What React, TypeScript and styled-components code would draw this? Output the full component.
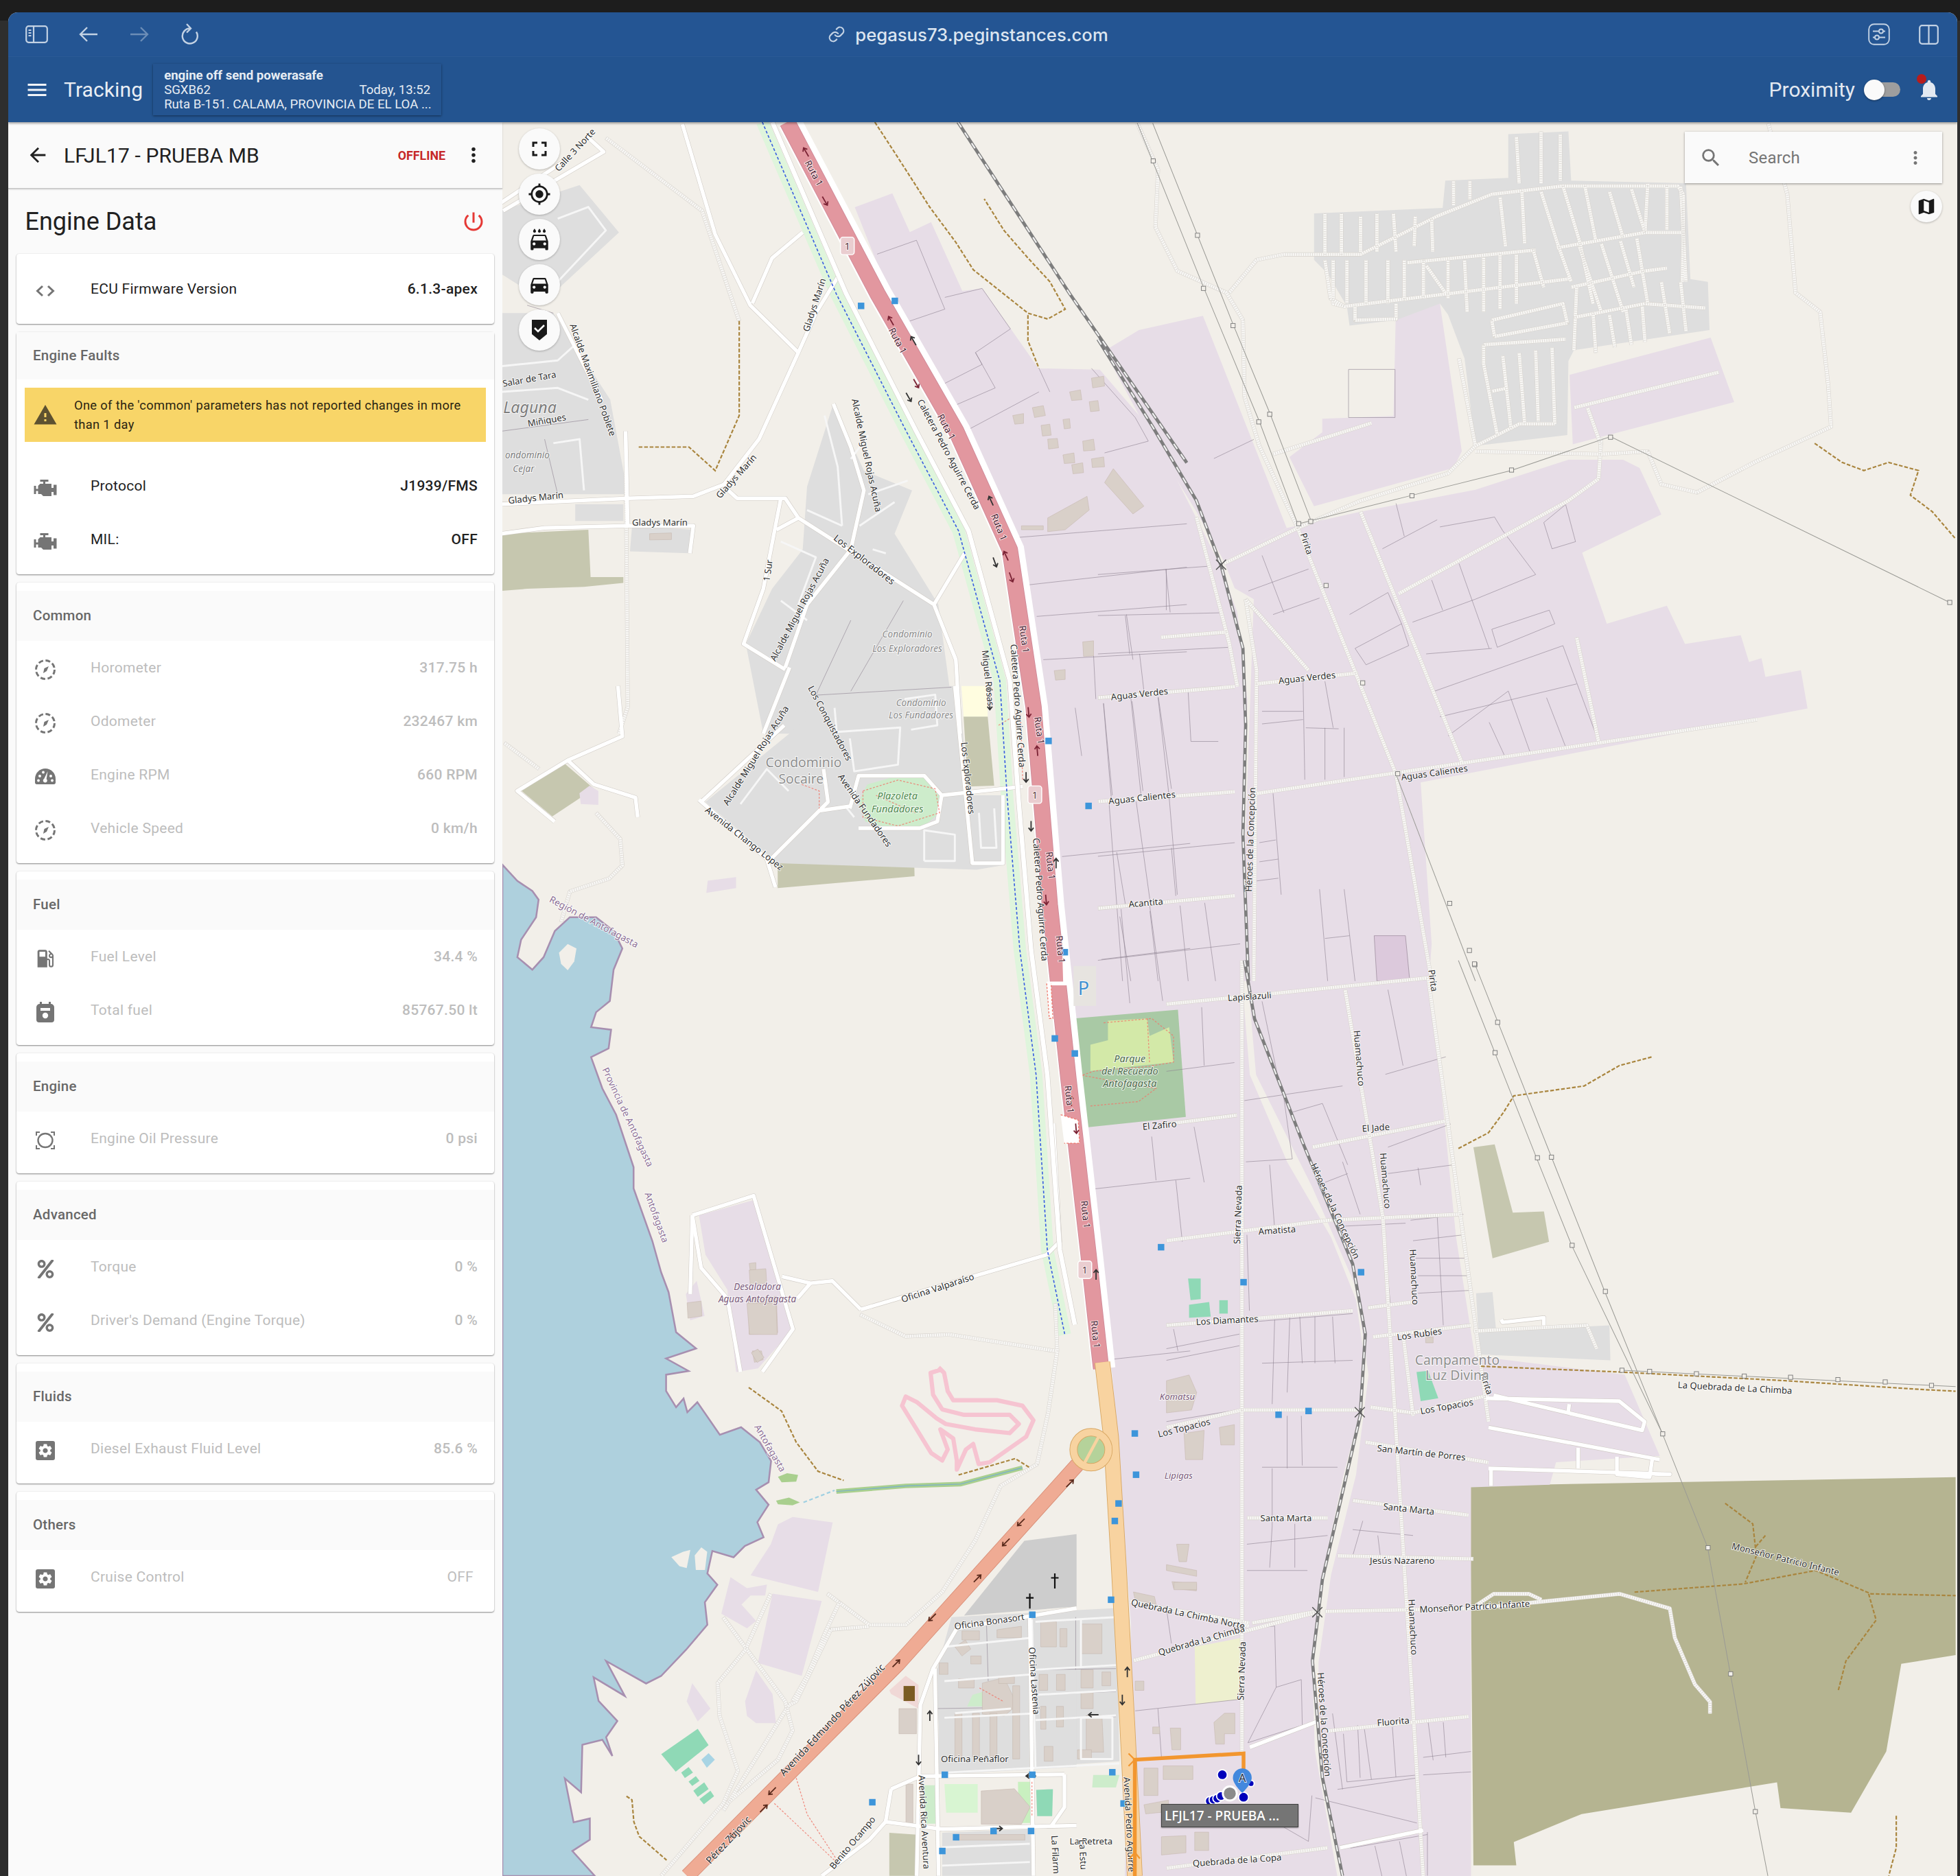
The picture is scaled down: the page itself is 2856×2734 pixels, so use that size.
import React from "react";
import styled, { createGlobalStyle } from "styled-components";
import { FaPercent } from "react-icons/fa";
import {
  MdArrowBack,
  MdDirectionsCar,
  MdFullscreen,
  MdGpsFixed,
  MdLocalCarWash,
  MdLocalGasStation,
  MdMap,
  MdMenu,
  MdMoreVert,
  MdNotifications,
  MdPowerSettingsNew,
  MdSearch,
  MdSettings,
  MdWarning,
} from "react-icons/md";

const GlobalStyle = createGlobalStyle`
  html, body { margin: 0; padding: 0; background: #1d1d1d; }
  * { box-sizing: border-box; }
  body { font-family: Roboto, "Liberation Sans", sans-serif; }
`;

/* ---------- page shell ---------- */

const Frame = styled.div`
  width: 2856px;
  height: 2734px;
  padding: 18px 4px 0 12px;
  overflow: hidden;
  background: linear-gradient(#1d1d1d 0, #1d1d1d 30px, #2e2e2e 30px);
`;

const Browser = styled.div`
  height: 100%;
  display: flex;
  flex-direction: column;
  border-radius: 14px 14px 0 0;
  overflow: hidden;
  background: #fafafa;
`;

const TitleBar = styled.div`
  height: 65px;
  flex: none;
  display: flex;
  align-items: center;
  padding: 0 24px 0 25px;
  background: #245593;
  border-bottom: 1px solid #2c5c98;
  color: #c3d2e4;
`;

const NavIcons = styled.div`
  display: flex;
  align-items: center;
  gap: 44px;
  width: 300px;
`;

const UrlBar = styled.div`
  flex: 1;
  display: flex;
  justify-content: center;
  align-items: center;
  gap: 14px;
  margin-left: -238px;
  font-family: Inter, "Noto Sans", sans-serif;
  font-size: 25.7px;
  font-weight: 500;
  color: #dce5f0;
`;

const WinIcons = styled.div`
  display: flex;
  align-items: center;
  gap: 42px;
  margin-right: 3px;
`;

const AppBar = styled.header`
  height: 95px;
  flex: none;
  display: flex;
  align-items: center;
  padding: 0 23px 0 24px;
  background: #235490;
  color: #f1f4f8;
  box-shadow: 0 2px 3px rgba(0, 0, 0, 0.35);
  z-index: 3;
`;

const AppTitle = styled.div`
  margin-left: 21px;
  font-size: 30px;
  letter-spacing: 0.1px;
  color: #e9eef4;
`;

const Notice = styled.div`
  width: 420px;
  height: 75px;
  margin-left: 15px;
  padding: 7px 16px;
  background: #245490;
  box-shadow: 0 1px 3px rgba(0, 0, 0, 0.45);
  font-size: 18.6px;
  line-height: 21px;
  color: #e6ecf3;
  white-space: nowrap;
`;

const NoticeTitle = styled.div`
  font-weight: 700;
`;

const NoticeRow = styled.div`
  display: flex;
  justify-content: space-between;
`;

const Spacer = styled.div`
  flex: 1;
`;

const ProximityLabel = styled.div`
  font-size: 30px;
  color: #e3e9f1;
`;

const Toggle = styled.div`
  position: relative;
  width: 48px;
  height: 21px;
  margin: 0 24px 0 18px;
  border-radius: 11px;
  background: #9e9e9e;
`;

const ToggleThumb = styled.span`
  position: absolute;
  left: -5px;
  top: -4px;
  width: 30px;
  height: 30px;
  border-radius: 50%;
  background: #fafafa;
  box-shadow: 0 1px 3px rgba(0, 0, 0, 0.4);
`;

const Bell = styled.div`
  position: relative;
  display: flex;
  color: #e3e9f1;
`;

const BellDot = styled.span`
  position: absolute;
  left: 0;
  top: -5px;
  width: 14px;
  height: 14px;
  border-radius: 50%;
  background: #b71c1c;
`;

const Body = styled.div`
  flex: 1;
  min-height: 0;
  display: flex;
`;

/* ---------- side panel ---------- */

const Panel = styled.aside`
  width: 720px;
  flex: none;
  padding: 0 12px;
  background: #fafafa;
  z-index: 2;
`;

const PanelHeader = styled.div`
  height: 97px;
  margin: 0 -12px;
  padding: 0 25px 0 26px;
  display: flex;
  align-items: center;
  border-bottom: 1px solid #c4c4c4;
  box-shadow: 0 1px 2px rgba(0, 0, 0, 0.2);
  color: #212121;
`;

const PanelTitle = styled.div`
  margin-left: 21px;
  flex: 1;
  font-size: 30px;
  letter-spacing: 0.1px;
`;

const Offline = styled.div`
  margin-right: 24px;
  font-size: 17.8px;
  font-weight: 700;
  color: #c62828;
`;

const HeadingRow = styled.div`
  height: 95px;
  padding: 0 12px 0 12.5px;
  display: flex;
  align-items: center;
  justify-content: space-between;
  color: #212121;
`;

const Heading = styled.h2`
  margin: 0;
  font-size: 36px;
  font-weight: 400;
`;

const Card = styled.section<{ $flush?: boolean }>`
  margin-bottom: 12px;
  padding: ${(p) => (p.$flush ? "0 0 12px" : "12px 0")};
  border-radius: 4px;
  background: #fff;
  box-shadow: 0 1px 2px rgba(0, 0, 0, 0.45), 0 0 2px rgba(0, 0, 0, 0.08);
`;

const CardTitle = styled.div<{ $short?: boolean }>`
  height: ${(p) => (p.$short ? 69 : 73)}px;
  display: flex;
  align-items: center;
  padding: 0 0 2px 24px;
  background: #fafafa;
  font-size: 20.5px;
  font-weight: 500;
  letter-spacing: 0.25px;
  color: #686868;
`;

const Row = styled.div<{ $muted?: boolean }>`
  height: 78px;
  display: flex;
  align-items: center;
  padding-right: 24px;
  font-size: 21px;
  letter-spacing: 0.28px;
  color: ${(p) => (p.$muted ? "#bdbdbd" : "#212121")};
`;

const IconSlot = styled.div`
  width: 108px;
  flex: none;
  display: flex;
  justify-content: center;
  padding-right: 24px;
  margin-top: 6px;
  color: #757575;
`;

const RowLabel = styled.div`
  flex: 1;
`;

const RowValue = styled.div<{ $inset?: boolean; $thin?: boolean }>`
  font-weight: ${(p) => (p.$thin ? 400 : 500)};
  margin-right: ${(p) => (p.$inset ? 6 : 0)}px;
`;

const Alert = styled.div`
  height: 79px;
  margin: 12px 12px 25px;
  padding: 0 34px 0 12px;
  display: flex;
  align-items: center;
  gap: 24px;
  background: #f8d568;
  font-size: 18.3px;
  line-height: 27.5px;
  letter-spacing: 0.35px;
  color: #2a2412;
  svg {
    flex: none;
    color: #5d5130;
  }
`;

const GearTile = styled.span`
  width: 28px;
  height: 28px;
  display: flex;
  align-items: center;
  justify-content: center;
  border-radius: 3px;
  background: #757575;
  color: #fff;
`;

/* ---------- map area ---------- */

const MapArea = styled.main`
  position: relative;
  flex: 1;
  min-width: 0;
  overflow: hidden;
  background: #f2efe9;
`;

const MapSvg = styled.svg`
  display: block;
  width: 100%;
  height: 100%;
  text {
    font-family: "Noto Sans", "DejaVu Sans", sans-serif;
    paint-order: stroke;
    stroke: rgba(255, 255, 255, 0.85);
    stroke-width: 1px;
    text-anchor: middle;
  }
`;

const MapTools = styled.div`
  position: absolute;
  left: 24px;
  top: 9px;
  display: flex;
  flex-direction: column;
  gap: 6px;
`;

const RoundButton = styled.button<{ $size?: number }>`
  width: ${(p) => p.$size ?? 60}px;
  height: ${(p) => p.$size ?? 60}px;
  padding: 0;
  display: flex;
  align-items: center;
  justify-content: center;
  border: 0;
  border-radius: 50%;
  background: #fafafa;
  color: #1a1a1a;
  box-shadow: 0 1px 3px rgba(0, 0, 0, 0.25);
`;

const SearchBox = styled.div`
  position: absolute;
  right: 22px;
  top: 14px;
  width: 375px;
  height: 75px;
  display: flex;
  align-items: center;
  padding: 0 24px 0 21px;
  background: #fafafa;
  color: #757575;
  box-shadow: 0 1px 3px rgba(0, 0, 0, 0.4);
  font-size: 24px;
`;

const SearchText = styled.div`
  flex: 1;
  margin-left: 38px;
  letter-spacing: 0.2px;
`;

const MapToggle = styled.div`
  position: absolute;
  right: 22px;
  top: 100px;
`;

const VehicleLabel = styled.div`
  position: absolute;
  left: 960px;
  top: 2451px;
  width: 200px;
  height: 34px;
  padding-left: 4px;
  display: flex;
  align-items: center;
  background: #757575;
  border: 1px solid #3f3f3f;
  box-shadow: 0 1px 2px rgba(0, 0, 0, 0.4);
  font-family: "Noto Sans", sans-serif;
  font-size: 19px;
  font-weight: 500;
  color: #fff;
`;

/* ---------- drawn icons ---------- */

const SidebarIcon = () => (
  <svg width="33" height="26" viewBox="0 0 33 26" fill="none" stroke="currentColor" strokeWidth="2.2">
    <rect x="1.2" y="1.2" width="30.6" height="23.6" rx="3.5" />
    <path d="M12 1.2v23.6" />
    <path d="M4.5 7h4M4.5 11h4M4.5 15h4" strokeWidth="1.8" />
  </svg>
);

const BackIcon = ({ faded }: { faded?: boolean }) => (
  <svg width="30" height="26" viewBox="0 0 30 26" fill="none" stroke="currentColor" strokeWidth="2.4" opacity={faded ? 0.45 : 1}>
    {faded ? <path d="M2 13h25M17 3l10 10-10 10" /> : <path d="M28 13H3M13 3 3 13l10 10" />}
  </svg>
);

const ReloadIcon = () => (
  <svg width="28" height="32" viewBox="0 0 28 32" fill="none" stroke="currentColor" strokeWidth="2.4">
    <path d="M15 7.5a11 11 0 1 0 9 5" />
    <path d="M10 1l6 6.5-6 6" />
  </svg>
);

const FiltersIcon = () => (
  <svg width="32" height="32" viewBox="0 0 32 32" fill="none" stroke="currentColor" strokeWidth="1.9">
    <rect x="1.2" y="1.2" width="29.6" height="29.6" rx="7.5" />
    <path d="M7 11.5h9M22 11.5h3M7 20.5h3M16 20.5h9" />
    <circle cx="19" cy="11.5" r="3" />
    <circle cx="13" cy="20.5" r="3" />
  </svg>
);

const SplitIcon = () => (
  <svg width="29" height="29" viewBox="0 0 29 29" fill="none" stroke="currentColor" strokeWidth="2.2">
    <rect x="1.2" y="1.2" width="26.6" height="26.6" rx="3.5" />
    <path d="M14.5 1.2v26.6" />
  </svg>
);

const LinkIcon = () => (
  <svg width="26" height="26" viewBox="0 0 24 24" fill="none" stroke="#c3d2e4" strokeWidth="2" strokeLinecap="round">
    <path d="M10 13a5 5 0 0 0 7.5.5l3-3a5 5 0 0 0-7-7l-1.7 1.7" />
    <path d="M14 11a5 5 0 0 0-7.5-.5l-3 3a5 5 0 0 0 7 7l1.7-1.7" />
  </svg>
);

const CodeIcon = () => (
  <svg width="30" height="26" viewBox="0 0 30 26" fill="none" stroke="currentColor" strokeWidth="3">
    <path d="M11 6 3.5 13l7.5 7M19 6l7.5 7-7.5 7" />
  </svg>
);

const EngineIcon = () => (
  <svg width="36" height="36" viewBox="0 0 24 24" fill="currentColor">
    <path d="M7 4v2h3v2H7l-2 2v3H3v-3H1v8h2v-3h2v3h3l2 2h8v-4h2v3h3V9h-3v3h-2V8h-6V6h3V4H7z" />
  </svg>
);

const DashedGaugeIcon = () => (
  <svg width="32" height="32" viewBox="0 0 32 32" fill="none" stroke="currentColor">
    <circle cx="16" cy="16" r="13.5" strokeWidth="3" strokeDasharray="7 3.6" />
    <path d="M13 21l1.5-7L21 11l-3 7z" fill="currentColor" stroke="none" />
  </svg>
);

const RpmIcon = () => (
  <svg width="32" height="28" viewBox="0 0 32 28" fill="currentColor">
    <path d="M16 2C7.7 2 1 8.7 1 17v5.5c0 1.4 1.1 2.5 2.5 2.5h25c1.4 0 2.5-1.1 2.5-2.5V17C31 8.7 24.3 2 16 2z" />
    <circle cx="8" cy="13" r="2" fill="#fff" />
    <circle cx="13" cy="7.5" r="1.9" fill="#fff" />
    <circle cx="24" cy="13" r="2" fill="#fff" />
    <circle cx="6" cy="19.5" r="1.9" fill="#fff" />
    <circle cx="26" cy="19.5" r="1.9" fill="#fff" />
    <path d="M19.5 6 17.7 17.2a3 3 0 1 1-3.4-.3z" fill="#fff" />
  </svg>
);

const CanIcon = () => (
  <svg width="26" height="30" viewBox="0 0 26 30" fill="currentColor">
    <path d="M5 0h3v3h10V0h3v3a5 5 0 0 1 5 5v18a4 4 0 0 1-4 4H4a4 4 0 0 1-4-4V8a5 5 0 0 1 5-5z" />
    <rect x="6" y="9" width="14" height="4" fill="#fff" />
    <circle cx="13" cy="20" r="4.2" fill="#fff" />
  </svg>
);

const OilIcon = () => (
  <svg width="28" height="26" viewBox="0 0 28 26" fill="none" stroke="currentColor">
    <ellipse cx="14" cy="13" rx="10.5" ry="10" strokeWidth="2.4" />
    <path d="M1 6V1h5M22 1h5v5M27 20v5h-5M6 25H1v-5" strokeWidth="2" />
  </svg>
);

const PennantIcon = () => (
  <svg width="26" height="32" viewBox="0 0 26 32">
    <path d="M2 1h22v21l-11 9-11-9z" fill="#1a1a1a" />
    <path d="M6 13l5 5 9-9" fill="none" stroke="#fff" strokeWidth="2.6" />
  </svg>
);

/* ---------- map drawing ---------- */

// every map shape below was read off a crop, a prefix tells which crop: [x0, y0, kx, ky]
const crops: Record<string, number[]> = {
  m: [0, 0, 1, 1],
  a: [400.8, 93.3, 0.35, 0.315],
  b: [878.5, 98.8, 0.4377, 0.4377],
  c: [403.5, 549, 0.35, 0.35],
  d: [403.5, 1043, 0.292, 0.292],
  e: [933.3, 768.6, 0.4027, 0.467],
  f: [713.7, 1262.8, 0.28, 0.183],
};

const toPath = (s: string, close = false) => {
  const [key, rest] = s.split(":");
  const [x0, y0, kx, ky] = crops[key];
  const pts = rest.trim().split(/\s+/).map((p) => {
    const [x, y] = p.split(",").map(Number);
    return `${(x0 + x * kx).toFixed(1)} ${(y0 + y * ky).toFixed(1)}`;
  });
  return `M${pts.join("L")}${close ? "Z" : ""}`;
};

const toPoint = (x: number, y: number, key = "m") => {
  const [x0, y0, kx, ky] = crops[key];
  return [x0 + x * kx, y0 + y * ky];
};

const sea =
  "m:402,692 414,705 426,713 431,720 429,734 417,752 414,766 426,776 435,766 444,745 456,734 477,734 491,745 498,759 491,776 488,801 477,810 473,822 489,824 487,839 473,846 482,871 493,892 507,934 507,951 522,993 529,1018 535,1034 541,1066 557,1079 533,1087 551,1097 533,1100 533,1113 541,1126 547,1119 550,1130 558,1122 576,1148 593,1142 608,1154 617,1169 615,1186 605,1192 615,1204 606,1218 611,1230 596,1237 587,1246 570,1241 566,1259 574,1268 564,1282 566,1300 549,1320 529,1341 517,1347 485,1329 500,1357 475,1342 479,1361 494,1377 485,1390 490,1405 482,1392 466,1396 465,1434 452,1423 459,1458 472,1455 472,1472 458,1481 476,1501 402,1501";

const olive = [
  "e:603,900 1568,885 1568,1190 1460,1205 1430,1355 1360,1460 1220,1452 1213,1408 825,1462 690,1510 695,1550 610,1550",
];

const paleOlive = [
  "e:610,320 652,315 688,432 750,430 760,482 648,510",
  "c:625,405 830,380 830,330 935,325 938,435 625,462",
  "c:40,240 135,175 205,235 110,298",
  "c:1050,70 1105,70 1120,228 1060,230",
  "a:3,1060 200,1050 205,1170 280,1170 280,1185 190,1195 60,1200 3,1205",
  "d:1055,1450 1130,1455 1130,1568 1055,1568",
];

const purple = [
  "m:684,166 714,155 728,186 745,178 770,233 786,231 831,295 880,296 922,345 975,450 990,490 998,560 995,700 995,800 1000,860 1030,930 1065,990 1085,1040 1092,1090 1088,1130 1075,1180 1058,1260 1050,1330 1052,1400 1070,1501 900,1501 905,1300 890,1100 875,1000 860,850 840,640 825,490 800,430 745,320",
  "b:0,395 22,410 75,378 192,352 345,740 230,800 180,710 100,580",
  "b:350,610 410,565 410,540 540,535 545,330 625,330 665,600 650,630 395,700",
  "b:862,460 1120,392 1163,510 868,587",
  "b:690,670 860,615 960,615 990,630 1030,715 885,785 930,915 1040,882 1073,952 1175,936 1190,985 1213,978 1220,1012 1285,1000 1297,1070 590,1205 610,1500 605,1568 260,1568 285,870 250,850 230,800 345,740 480,710",
  "m:1000,640 1120,620 1143,770 1165,990 1180,1085 1300,1100 1328,1165 1245,1170 1240,1188 1177,1190 1177,1501 1075,1501 1055,1400 1055,1330 1065,1260 1085,1180 1095,1100 1085,1030 1050,950 1005,860 998,780",
  "d:790,585 900,600 860,790 675,745 730,660 750,605",
  "d:735,795 870,815 815,1020 695,985",
  "d:620,750 665,780 720,770 715,800 675,800 650,825 690,870 665,890 595,850",
  "d:690,1005 735,1070 745,1150 690,1150 665,1130 660,1090",
  "d:515,1040 565,1110 530,1145 500,1090",
  "c:445,1210 570,1175 660,1470 580,1560 530,1568 510,1380 460,1300",
  "c:465,445 530,437 530,462 462,473",
  "c:172,245 195,228 215,240 215,272 175,270",
  "c:415,1390 440,1360 458,1440 425,1450",
];

const gray = [
  "b:395,165 630,155 635,105 750,100 750,20 860,15 865,105 1075,110 1083,285 1115,290 1118,378 870,415 860,435 858,570 690,590 670,430 640,350 625,330 545,360 460,370 455,335 420,275 395,250",
  "a:0,240 180,175 270,295 100,470 0,400",
  "a:0,500 120,500 180,600 250,720 290,960 3,960",
  "a:760,730 830,900 940,950 900,1060 1000,1240 1040,1568 720,1568 600,1568 560,1340 620,1200 690,1100 700,940",
  "c:460,265 675,90 710,0 1040,0 1060,250 1145,250 1140,410 1080,420 625,405",
  "a:170,985 280,985 280,1028 170,1028",
  "a:300,1040 440,1050 430,1110 295,1105",
  "f:170,170 640,130 650,800 150,850 120,450",
  "d:1190,1000 1440,880 1568,880 1568,1270 1190,1290",
  "d:1200,1450 1440,1440 1450,1568 1200,1568",
  "e:615,570 648,568 655,635 880,625 882,685 622,675",
];

const darkGray = ["d:1260,855 1425,650 1568,632 1568,830"];

const greens: [string, string][] = [
  ["#a9c9a5", "c:1302,760 1540,740 1558,985 1320,1010"],
  ["#d3e9a8", "c:1380,765 1470,760 1475,800 1520,780 1530,860 1480,865 1340,880 1340,820 1380,810"],
  ["#cdeccb", "c:810,265 830,225 890,208 960,208 995,240 995,290 960,320 880,325 825,310"],
  ["#fffde0", "c:1045,0 1105,0 1105,70 1050,70"],
  ["#eef0cf", "f:865,300 1000,260 990,530 868,550"],
  ["#8fd9b6", "e:43,545 68,545 68,580 48,582"],
  ["#8fd9b6", "e:45,590 85,585 88,610 45,612"],
  ["#8fd9b6", "e:105,582 122,582 122,605 105,605"],
  ["#8fd9b6", "e:497,705 520,703 540,750 505,755"],
  ["#8fd9b6", "d:430,1235 530,1165 560,1210 470,1283"],
  ["#8fd9b6", "d:485,1285 505,1270 517,1285 495,1300"],
  ["#8fd9b6", "d:505,1310 525,1295 535,1308 515,1322"],
  ["#8fd9b6", "d:518,1335 548,1312 560,1330 530,1352"],
  ["#8fd9b6", "d:535,1358 565,1335 575,1350 547,1372"],
  ["#a8d4e4", "d:540,1250 560,1232 577,1250 555,1272"],
  ["#8fd9b6", "f:412,925 460,922 458,1040 415,1040"],
  ["#d8f5d2", "f:150,900 245,900 245,1025 155,1025"],
  ["#c9f0c0", "f:360,890 395,890 395,1070 362,1070"],
  ["#cdeccb", "f:230,510 330,465 325,560 215,560"],
  ["#cdeccb", "f:575,860 650,860 640,915 572,915"],
  ["#cdeccb", "d:1150,1320 1185,1320 1185,1425 1155,1425"],
  ["#fbeee0", "d:1060,1055 1100,1020 1135,1050 1135,1110 1100,1080 1060,1070"],
];

const buildings = [
  "a:1380,930 1400,895 1470,990 1445,1010",
  "a:1250,1020 1340,965 1345,1000 1290,1050 1250,1055",
  "a:1330,1335 1355,1332 1355,1370 1332,1372",
  "a:1265,1408 1290,1405 1290,1430 1268,1432",
  "a:1190,1040 1240,1040 1240,1050 1190,1050",
  "a:1170,760 1195,755 1195,780 1175,782",
  "a:1215,740 1240,735 1245,760 1220,765",
  "a:1300,700 1325,695 1328,720 1305,722",
  "a:1350,665 1378,660 1380,685 1353,690",
  "a:1345,725 1365,722 1368,748 1348,750",
  "a:1235,785 1255,782 1258,810 1238,812",
  "a:1285,770 1300,768 1302,792 1288,794",
  "a:1250,820 1272,818 1275,842 1252,845",
  "a:1330,825 1355,820 1358,848 1332,850",
  "a:1285,860 1310,855 1312,880 1288,882",
  "a:1350,870 1378,865 1380,890 1352,892",
  "a:1305,885 1330,880 1332,905 1308,908",
  "a:340,1060 390,1058 390,1075 340,1076",
  "c:560,1320 575,1318 575,1335 562,1335",
  "c:560,1335 598,1332 600,1365 562,1368",
  "c:558,1400 622,1395 625,1478 560,1482",
  "c:418,1410 450,1406 452,1440 420,1445",
  "c:567,1520 588,1520 592,1540 572,1546",
  "d:665,0 745,0 748,85 672,85",
  "d:677,135 695,125 712,148 693,162",
  "d:1310,1040 1370,1025 1405,1100 1370,1130 1310,1125",
  "f:800,15 870,25 870,55 805,45",
  "f:690,60 750,80 755,115 695,95",
  "f:695,450 720,450 720,490 695,490",
  "f:745,650 765,650 765,680 745,680",
  "f:795,655 825,655 825,750 800,750",
  "f:920,630 950,590 980,590 980,680 950,680 950,725 925,725",
  "f:775,820 860,820 860,880 775,880",
  "f:720,830 760,830 760,950 720,950",
  "f:770,1130 840,1125 840,1200 770,1210",
  "f:865,1110 905,1110 905,1190 865,1190",
  "f:720,990 790,970 790,1020 725,1030",
  "f:255,930 350,920 395,1000 370,1075 255,1075",
  "f:555,600 600,600 605,760 555,760",
  "f:435,735 460,735 460,800 435,800",
  "f:540,400 575,400 575,480 540,480",
  "f:600,410 625,410 625,470 600,470",
  "f:420,420 445,420 445,490 420,490",
  "f:470,420 495,420 495,490 470,490",
  "f:540,500 575,500 575,570 540,570",
  "f:425,190 470,190 470,300 425,300",
  "f:480,220 500,220 500,300 480,300",
  "f:540,200 600,200 600,330 540,330",
  "f:200,230 250,230 250,270 200,270",
  "f:300,225 370,210 370,260 300,260",
  "f:180,300 210,270 225,310 200,340",
  "f:225,340 255,340 255,375 225,375",
  "f:135,370 160,370 160,420 135,420",
  "f:190,440 235,440 235,480 190,480",
  "f:305,430 350,430 350,460 305,460",
  "f:425,560 440,560 440,660 425,660",
  "f:470,560 490,560 490,650 470,650",
  "f:530,750 570,750 570,790 530,790",
  "f:20,570 70,570 70,680 20,680",
  "f:40,900 60,900 60,1080 40,1080",
  "f:180,590 200,590 200,780 180,780",
  "f:230,590 250,590 250,780 230,780",
  "f:280,590 300,590 300,780 280,780",
  "f:345,470 365,470 365,790 345,790",
  "f:180,1120 380,1120 380,1145 180,1145",
  "e:0,720 45,710 60,740 50,770 0,775",
  "e:35,810 75,805 72,855 38,855",
  "e:105,800 135,795 135,830 108,830",
  "e:515,645 530,645 530,655 515,655",
  "e:20,1000 45,1000 40,1030 25,1030",
  "e:0,1035 60,1045 60,1055 0,1045",
  "e:15,1065 60,1065 60,1078 15,1078",
];

const parcels = [
  "b:0,825 200,810", "b:0,900 225,895", "b:125,815 125,890", "b:50,900 58,970", "b:0,970 240,958",
  "b:10,1060 25,1240", "b:60,1050 80,1240", "b:110,1050 130,1230", "b:165,1040 170,1130 220,1130",
  "b:20,1240 45,1568", "b:0,1340 250,1315", "b:70,1240 95,1420", "b:130,1230 145,1410", "b:40,1450 60,1568",
  "b:95,1440 110,1568", "b:150,1430 165,1568", "b:195,1425 215,1568", "b:0,1530 260,1500", "b:300,790 340,895",
  "b:275,855 385,815", "b:320,898 405,868", "b:300,1075 375,1075", "b:300,1098 375,1090", "b:375,1020 378,1200",
  "b:415,1020 430,1105", "b:415,1200 415,1105", "b:450,1105 450,1195", "b:380,1105 440,1107", "b:320,1225 335,1410",
  "b:295,1315 325,1310", "b:295,1350 330,1345", "b:290,1385 330,1380", "b:405,1400 420,1568", "b:450,1400 470,1568",
  "b:415,1490 460,1485", "b:545,695 560,755", "b:520,778 620,725", "b:625,738 725,720 740,745 800,825 690,870",
  "b:610,835 630,890", "b:660,805 715,960", "b:575,912 690,870", "b:600,970 720,960", "b:610,1040 850,955 915,1130",
  "b:625,1085 875,1025", "b:640,1120 750,1038 790,1150", "b:715,1095 745,1160", "b:820,1050 855,1140",
  "b:460,898 530,858 555,915 470,960 490,990 568,955 555,915", "b:720,925 825,890 835,915 730,958 720,925",
  "b:815,730 855,697 873,765 830,778 815,730", "b:212,613 285,578", "b:458,450 543,450 543,538 458,538 458,450",
  "a:860,350 950,315 1015,490 935,520", "a:1015,460 1100,437 1165,540 1085,600 1130,690 1030,738 1012,680 1100,630 1085,600",
  "a:1045,810 1230,700", "a:1230,640 1255,700", "a:1350,640 1450,765 1480,825 1380,855", "a:1070,810 1150,1010",
  "a:1175,1070 1568,1035", "a:1205,1190 1568,1145", "a:1225,1270 1568,1240", "a:1520,1150 1530,1260", "a:1430,1265 1445,1380",
  "a:1240,1380 1568,1360", "a:1355,1370 1360,1480", "a:1460,1365 1470,1460",
  "c:1305,50 1320,160", "c:1370,40 1390,250", "c:1435,35 1460,240", "c:1495,25 1525,235", "c:1275,390 1568,360",
  "c:1400,380 1420,500", "c:1525,370 1535,480", "c:1410,510 1430,725", "c:1475,500 1505,720", "c:1365,625 1568,600",
  "c:1345,1150 1568,1125", "c:1480,1030 1490,1130", "c:1535,1130 1550,1270", "c:1380,1540 1568,1520", "c:1530,1470 1540,1520",
  "e:70,80 75,180", "e:0,190 135,175", "e:55,285 75,380", "e:155,240 350,215", "e:250,260 310,245 360,350", "e:190,70 225,215",
  "e:440,50 470,180", "e:230,215 250,340", "e:205,350 215,460", "e:158,345 250,340", "e:350,345 385,435", "e:315,380 360,365",
  "e:435,195 555,165", "e:440,320 565,280", "e:440,365 570,350", "e:500,355 505,385", "e:355,455 475,450", "e:430,455 445,590",
  "e:485,445 590,435", "e:538,440 550,625", "e:490,480 590,470", "e:495,510 595,510", "e:500,540 600,540", "e:500,570 605,565",
  "e:160,470 165,600", "e:160,620 370,605", "e:245,610 240,740", "e:215,615 210,760", "e:265,610 270,690", "e:295,610 295,690",
  "e:330,610 335,690", "e:190,690 370,685", "e:0,685 145,660", "e:0,665 145,640", "e:210,870 210,970", "e:240,780 240,870",
  "e:190,868 340,868", "e:268,780 270,865", "e:160,1000 320,985", "e:210,970 205,1040", "e:255,965 255,1040", "e:160,1045 280,1045",
  "e:0,790 140,770", "e:390,960 370,1020", "e:420,985 425,1020", "e:370,975 490,985", "e:330,1290 350,1420", "e:380,1310 385,1400",
  "e:340,1420 500,1400", "e:520,1305 530,1370", "e:550,1305 555,1365", "e:510,1365 605,1355", "e:510,1395 605,1390",
  "e:165,1145 215,1140 218,1245 162,1340 270,1310 268,1232 218,1245", "e:0,1110 10,1170", "f:695,580 990,530", "f:760,570 770,780",
  "f:1290,680 1300,890 1500,860 1490,640", "f:1350,660 1370,880", "f:1430,650 1440,870", "f:1210,960 1500,1070", "f:1200,950 1190,1150 1020,1000",
  "f:1310,1180 1530,1120", "f:1380,1170 1400,1302", "f:1450,1150 1470,1302", "f:1530,1110 1530,1300",
  "f:410,400 640,395", "f:410,510 640,495", "f:410,620 640,605", "f:525,170 525,400", "a:720,1470 1030,1450", "a:800,1280 720,1470", "a:920,1230 800,1460",
  "a:100,820 130,960", "a:0,800 200,770", "a:60,480 120,500", "f:270,190 275,450", "f:120,570 340,565",
];

const streets = [
  // north west
  "a:0,985 290,970 440,965 510,935 590,820 680,600 720,500 775,400",
  "a:0,1060 100,1045 290,1040 440,1040 432,1110",
  "a:415,20 490,300 570,480 680,600",
  "a:575,475 620,360 690,295",
  "a:5,240 235,90 195,50",
  "a:285,800 290,1040",
  "a:510,940 540,970 650,970 680,1020 630,1050",
  "a:640,970 600,1200 555,1340 650,1405",
  "a:680,1020 990,1240 1040,1380 1050,1568",
  "a:990,1240 1060,1110",
  "a:660,1400 600,1568",
  "a:800,1100 700,1240 650,1400",
  "a:760,730 800,840 830,950 800,1100",
  "a:0,220 150,110",
  "a:130,500 230,720",
  // condos
  "c:1030,0 1070,405 1140,405 1140,250",
  "c:1000,250 1185,230",
  "c:730,190 740,265 610,395",
  "c:720,285 790,275",
  "c:790,280 810,205 960,205 1000,250 990,310 950,325 810,325",
  "c:445,260 600,395 620,460",
  "c:450,265 640,90",
  // desaladora
  "c:815,1425 1240,1300 1270,1270 1255,1000",
  "c:635,1350 700,1365 750,1360 815,1425",
  "c:670,1400 700,1365",
  "c:430,1210 570,1165 660,1470 590,1568",
  "c:430,1210 450,1330 510,1400 540,1568",
  "c:430,1210 425,1390",
  "c:260,0 270,115 145,170 30,240 115,310",
  "c:145,170 205,225 300,255 305,300",
  // south neighbourhood
  "d:1130,1568 1140,1100 1175,1000 1240,890 1568,835",
  "d:1190,1568 1180,1000",
  "d:1060,1330 1140,1295 1535,1290",
  "d:1045,1420 1200,1440 1568,1430",
  "d:1440,860 1450,1568",
  "d:870,1568 1000,1470 1045,1420",
  "d:1535,1290 1535,1380 1500,1430",
  "d:1060,1330 1045,1420",
  "m:1000,1398 1060,1375",
  "e:345,1520 510,1490",
  "e:635,750 900,755 950,790 945,805 650,745",
  "e:800,760 798,775",
  "e:640,800 980,855",
  "e:640,870 1000,880 970,880",
  "e:645,870 645,900",
  "e:818,835 818,870",
  "e:895,850 895,880 960,885 965,855",
  "e:665,615 668,620 750,612 750,625",
];

const lanes = [
  // small streets inside the neighbourhoods
  "a:0,635 130,620 170,580", "a:0,700 130,690 200,720", "a:120,830 180,820 190,950", "a:130,260 200,230 240,290 130,420 80,380",
  "a:740,760 770,890 780,1040", "a:700,1000 780,1040", "a:840,810 800,870", "a:840,960 930,925", "a:820,1040 900,980", "a:850,1100 880,1110",
  "a:640,1080 720,1120 680,1240", "a:640,1230 700,1280", "c:755,50 760,105 905,95 900,180 800,195 790,120", "c:915,30 985,20 990,90 930,100",
  "c:800,300 780,275", "c:540,270 600,190 650,240", "c:960,400 960,330 1030,340 1030,400 960,400", "c:1085,290 1090,370 1125,370 1120,280",
  "f:150,610 420,590", "f:150,300 400,260", "f:150,450 400,420", "f:400,180 410,830", "f:410,190 640,170", "f:540,180 540,390", "f:410,400 640,380", "f:410,510 640,490", "f:410,620 640,600",
  "f:540,610 630,610 630,790 540,790 540,610", "f:180,590 340,570", "f:150,850 650,810", "d:1200,1490 1440,1480", "d:1200,1540 1440,1530",
];

const tracks = [
  "b:72,0 110,85 105,190 145,270 235,310 265,360 268,500 295,590 365,740",
  "b:240,310 290,250 340,240 480,240 620,170 720,130 850,115 1060,115 1070,130 1070,210 1068,290",
  "b:415,250 425,320 450,335 860,285",
  "b:1225,0 1260,130 1275,310 1320,345 1335,480 1340,555 1200,620 1095,675 1030,660 1005,600 920,605 690,600",
  "b:660,430 690,590 640,640 480,690 365,740 230,805",
  "b:920,575 915,650 860,690 550,860",
  "b:480,710 665,1168",
  "b:870,520 1135,455",
  "b:895,520 920,590",
  "b:320,605 500,548",
  "b:875,940 915,1130",
  "b:290,1225 1205,1090",
  "b:0,1050 250,1030",
  "b:290,1025 475,1005",
  "b:0,1240 250,1222",
  "b:0,1435 250,1412",
  "b:365,740 545,1190 610,1568",
  "b:270,870 290,1000 285,1568",
  "b:270,870 385,1000",
  "b:180,720 240,950 255,1030",
  "b:115,940 235,930",
  "b:765,25 770,110", "b:810,15 810,110", "b:845,20 845,105", "b:415,165 415,240", "b:445,165 445,240", "b:480,170 480,235",
  "b:510,165 510,235", "b:540,165 545,235", "b:580,170 578,225", "b:610,175 612,235", "b:650,105 650,150", "b:680,105 680,140",
  "b:735,135 745,225", "b:775,125 780,220", "b:810,125 840,220 865,290", "b:850,115 880,215 905,330", "b:890,115 910,215",
  "b:935,125 960,210", "b:975,120 1000,200", "b:1005,110 1000,200", "b:1040,115 1040,195", "b:1065,115 1075,290",
  "b:838,228 1000,200 1068,200", "b:865,300 1000,270", "b:1000,330 1110,338", "b:870,355 1000,330", "b:1030,290 1045,385", "b:1065,290 1075,380",
  "b:875,300 870,415", "b:905,345 910,420", "b:935,350 945,410", "b:965,340 975,405", "b:995,335 1000,400", "b:880,225 920,345", "b:920,220 960,345",
  "b:955,215 980,300", "b:985,210 1005,330", "b:1000,270 1040,265", "b:430,250 430,330 450,335", "b:455,250 455,330", "b:490,250 490,330", "b:530,250 530,330",
  "b:560,250 560,325", "b:595,250 595,320", "b:640,250 640,320", "b:670,250 675,345", "b:705,245 705,345", "b:735,240 735,340", "b:765,240 765,330",
  "b:795,230 815,300", "b:565,255 800,232", "b:600,260 635,310", "b:470,335 470,360 545,358 545,330", "b:720,360 850,330 858,365 725,390 720,360",
  "b:705,405 855,395", "b:705,405 705,440 730,570 690,590", "b:740,425 755,560", "b:770,420 780,550", "b:800,415 805,545", "b:830,410 835,550",
  "b:720,490 745,485", "b:730,570 770,550 835,550",
  "e:0,75 520,30",
  "e:520,30 640,790",
  "e:0,280 140,265",
  "e:290,320 555,275",
  "e:0,480 320,445 585,435",
  "e:0,625 370,600",
  "e:400,595 490,585",
  "e:410,645 605,625",
  "e:610,635 835,625 855,665",
  "e:0,800 150,770 380,770",
  "e:405,765 490,775 640,745",
  "e:395,825 640,860",
  "e:160,955 320,955",
  "e:370,925 600,950",
  "e:340,1020 610,1025",
  "e:315,1115 610,1110 900,1085 1000,1110 1010,1160 1050,1240 1080,1270 1080,1290",
  "e:615,1105 650,1085 720,1085 745,1095",
  "e:320,1320 600,1295",
  "e:0,1555 320,1520",
  "e:170,1135 300,1115",
  "e:0,1110 165,1135",
  "e:150,0 150,1360",
  "e:355,50 430,440 510,1568",
  "e:470,640 490,780",
  "f:690,360 1210,150",
  "f:680,100 1020,210",
  "d:975,30 1100,90 1220,85 1510,130",
  "d:885,795 1000,880 1100,880 1200,790 1290,650 1360,500 1460,440 1490,300 1515,130 1510,0",
  "d:1000,885 895,893 800,1090 780,1100 600,1390",
  "d:920,815 880,900 830,1020 790,1090",
  "d:730,795 660,950 585,1040 590,1130 640,1280 600,1370 430,1568",
  "d:600,860 770,1090 790,1170 750,1250 610,1370",
  "a:240,55 460,240 545,520",
  "a:285,800 290,1500 270,1568",
  "c:0,130 80,190",
  "c:210,290 265,350 270,410 240,440 150,470 130,540",
];

const trails = [
  "a:855,15 905,100 980,230 1040,320 1080,390 1205,500 1250,515 1290,490 1255,420 1205,360 1150,290 1105,210",
  "a:1205,505 1205,570 1230,640",
  "a:545,520 545,760 490,900 430,840 315,840",
  "b:1310,585 1360,620 1400,635 1445,620 1500,635 1485,680 1525,710 1568,760",
  "e:580,322 640,295 670,260 690,232 830,215 900,180 965,165",
  "e:625,695 900,705 1230,720 1500,735 1568,738",
  "e:1110,930 1165,965 1172,1020 1150,1065",
  "e:930,1082 1145,1068 1290,1045 1400,1085 1568,1088",
  "e:1395,1085 1410,1130 1350,1200 1335,1250",
  "e:1190,985 1170,1005",
  "e:1450,1465 1450,1520 1435,1568",
  "d:670,230 760,295 800,380 860,460 930,485",
  "d:1245,470 1400,425 1440,450",
  "d:335,1350 350,1360 355,1420 370,1460 445,1525",
];

const footways = [
  "d:800,1300 830,1400 915,1530",
  "d:740,1370 910,1530",
  "c:1130,90 1180,60 1185,215",
  "c:1370,770 1480,760 1530,800 1530,860 1470,870 1350,880 1320,890 1490,920 1450,950 1340,960",
  "c:1470,760 1475,860",
  "c:820,240 900,215 985,235 995,290 900,320 820,300 820,240",
  "c:850,250 940,290",
  "c:680,225 720,240 720,280",
  "f:250,480 320,540",
  "f:400,890 400,1040",
];

const powerLines = [
  "b:72,0 193,300 295,545 365,732",
  "b:100,0 248,370 315,532 390,728",
  "b:367,732 575,680 755,635 937,573 1557,876",
  "b:545,1190 690,1568",
  "e:580,0 735,338 805,488 985,810 1075,1005 1120,1220 1170,1458 1195,1568",
  "e:612,5 765,337 870,565 985,810",
  "e:905,702 1520,728 1568,730",
];

const towers: [number, number, string][] = [
  [101, 69, "b"], [182, 205, "b"], [193, 302, "b"], [247, 370, "b"], [314, 532, "b"], [294, 546, "b"], [367, 732, "b"], [389, 728, "b"],
  [574, 681, "b"], [756, 634, "b"], [937, 574, "b"], [1557, 876, "b"], [417, 845, "b"], [484, 1023, "b"], [548, 1189, "b"], [643, 1426, "b"],
  [679, 1512, "b"], [689, 1538, "b"], [612, 6, "e"], [658, 106, "e"], [653, 158, "e"], [737, 338, "e"], [765, 337, "e"], [806, 488, "e"],
  [872, 567, "e"], [905, 702, "e"], [960, 704, "e"], [1053, 708, "e"], [1148, 712, "e"], [1240, 714, "e"], [1334, 718, "e"], [1428, 722, "e"],
  [1520, 728, "e"], [986, 811, "e"], [1076, 1006, "e"], [1121, 1222, "e"], [1170, 1458, "e"],
];

const stops: [number, number][] = [
  [689, 245], [716, 241], [839, 593], [871, 645], [852, 762], [860, 843], [844, 831], [929, 998], [995, 1026], [1089, 1018],
  [1023, 1132], [1047, 1129], [908, 1147], [895, 1203], [892, 1217], [826, 1292], [889, 1280], [756, 1420], [826, 1420],
  [890, 1418], [765, 1470], [795, 1465], [825, 1465], [899, 1443], [754, 1481], [909, 1180], [698, 1442],
];

const shields: [number, number][] = [[678, 197], [828, 636], [868, 1016]];

const arrows: [number, number, number, string][] = [
  [645, 122, -30, "#7b2335"], [660, 161, 150, "#7b2335"], [713, 257, -30, "#7b2335"], [733, 307, 150, "#7b2335"], [805, 445, -25, "#7b2335"],
  [809, 462, 160, "#7b2335"], [823, 570, 175, "#7b2335"], [830, 601, -5, "#7b2335"], [837, 720, 175, "#7b2335"], [857, 881, -5, "#7b2335"], [861, 903, 175, "#7b2335"],
  [731, 273, -30, "#333"], [727, 318, 150, "#333"], [793, 401, -25, "#333"], [796, 450, 160, "#333"], [792, 564, 180, "#333"],
  [821, 622, 180, "#333"], [825, 661, 180, "#333"], [845, 691, 0, "#333"], [792, 554, 0, "#333"], [877, 1020, 0, "#333"],
  [902, 1338, 0, "#333"], [898, 1360, 180, "#333"], [744, 1373, 0, "#333"], [735, 1408, 180, "#333"], [875, 1372, -90, "#333"], [825, 1421, -90, "#333"], [798, 1463, 90, "#333"],
  [856, 1187, 45, "#5a2a1c"], [817, 1218, 225, "#5a2a1c"], [805, 1234, 225, "#5a2a1c"], [782, 1263, 45, "#5a2a1c"], [746, 1294, 225, "#5a2a1c"],
  [717, 1331, 45, "#5a2a1c"], [618, 1433, 225, "#5a2a1c"], [611, 1447, 45, "#5a2a1c"], [587, 1467, 225, "#5a2a1c"],
];

// text, x, y, angle, size, colour, italic
type Label = [string, number, number, number?, number?, string?, boolean?];
const ROAD = "#2f2f2f";
const RED = "#4c2030";
const PURPLE = "#8c6f96";
const labels: Label[] = [
  ["Ruta 1", 649, 140, 62, 7, RED], ["Ruta 1", 716, 274, 62, 7, RED], ["Ruta 1", 755, 343, 62, 7, RED], ["Ruta 1", 797, 423, 68, 7, RED],
  ["Ruta 1", 817, 512, 82, 7, RED], ["Ruta 1", 829, 585, 82, 7, RED], ["Ruta 1", 838, 693, 84, 7, RED], ["Ruta 1", 846, 760, 84, 7, RED],
  ["Ruta 1", 853, 880, 84, 7, RED], ["Ruta 1", 866, 972, 84, 7, RED], ["Ruta 1", 874, 1068, 84, 7, RED],
  ["Caletera Pedro Aguirre Cerda", 757, 365, 62, 6.8], ["Caletera Pedro Aguirre Cerda", 812, 565, 86, 6.8], ["Caletera Pedro Aguirre Cerda", 830, 720, 86, 6.8],
  ["Gladys Marín", 654, 245, -72, 6.8], ["Gladys Marín", 591, 383, -48, 6.8], ["Gladys Marín", 429, 401, -6, 6.8], ["Gladys Marín", 528, 421, 0, 6.8],
  ["Alcalde Maximiliano Poblete", 472, 305, 70, 6.8], ["Alcalde Miguel Rojas Acuña", 691, 365, 78, 6.8], ["Alcalde Miguel Rojas Acuña", 642, 489, -62, 6.8],
  ["Alcalde Miguel Rojas Acuña", 607, 606, -58, 6.8], ["Calle 3 Norte", 462, 122, -47, 6.8], ["Salar de Tara", 424, 306, -10, 6.8],
  ["Laguna", 424, 331, 0, 12, "#7d7d7d", true], ["Miñiques", 438, 339, -10, 6.8], ["ondominio", 422, 367, 0, 7, "#7d7d7d", true], ["Cejar", 419, 378, 0, 7, "#7d7d7d", true],
  ["Los Exploradores", 690, 450, 38, 7], ["Condominio", 726, 510, 0, 7, "#8a8a8a", true], ["Los Exploradores", 726, 522, 0, 7, "#8a8a8a", true],
  ["1 Sur", 617, 457, -82, 6.8], ["Miguel Rosas", 788, 543, 84, 6.8], ["Los Exploradores", 772, 623, 84, 6.8], ["Los Conquistadores", 662, 580, 62, 6.8],
  ["Condominio", 643, 614, 0, 10, "#8f8f8f"], ["Socaire", 641, 627, 0, 10, "#8f8f8f"], ["Condominio", 737, 565, 0, 7, "#8a8a8a", true], ["Los Fundadores", 737, 575, 0, 7, "#8a8a8a", true],
  ["Plazoleta", 718, 640, 0, 7.5, "#4e8a4e", true], ["Fundadores", 718, 650, 0, 7.5, "#4e8a4e", true], ["Avenida Fundadores", 690, 650, 55, 6.8], ["Avenida Chango Lopez", 594, 673, 38, 6.8],
  ["Región de Antofagasta", 474, 740, 28, 7, PURPLE], ["Provincia de Antofagasta", 500, 895, 65, 7, PURPLE], ["Antofagasta", 523, 975, 70, 7, PURPLE], ["Antofagasta", 614, 1160, 60, 7, PURPLE],
  ["Desaladora", 606, 1032, 0, 7, "#7a5a7a", true], ["Aguas Antofagasta", 606, 1042, 0, 7, "#7a5a7a", true], ["Oficina Valparaíso", 751, 1033, -18, 6.8],
  ["Parque", 904, 850, 0, 7.5, "#4b6b4b", true], ["del Recuerdo", 904, 860, 0, 7.5, "#4b6b4b", true], ["Antofagasta", 904, 870, 0, 7.5, "#4b6b4b", true],
  ["P", 867, 796, 0, 14, "#3f8fd0"],
  ["Avenida Edmundo Pérez Zújovic", 668, 1378, -47, 7.5], ["Pérez Zujovic", 585, 1474, -47, 7.5],
  ["Aguas Verdes", 912, 558, -6, 6.8], ["Aguas Verdes", 1046, 545, -6, 6.8], ["Aguas Calientes", 914, 641, -6, 6.8], ["Aguas Calientes", 1148, 621, -8, 6.8],
  ["Acantita", 917, 725, -5, 6.8], ["Lapislazuli", 1000, 800, -4, 6.8], ["El Zafiro", 928, 903, -5, 6.8], ["El Jade", 1101, 905, -4, 6.8], ["Amatista", 1022, 987, -4, 6.8],
  ["Los Diamantes", 982, 1059, -3, 6.8], ["Los Rubíes", 1136, 1070, -8, 6.8], ["Komatsu", 942, 1120, 0, 6.8, "#7a5a7a", true], ["Los Topacios", 948, 1145, -14, 6.8], ["Los Topacios", 1158, 1128, -10, 6.8],
  ["San Martín de Porres", 1137, 1165, 6, 6.8], ["Lipigas", 943, 1183, 0, 6.8, "#7a5a7a", true], ["Santa Marta", 1029, 1217, 0, 6.8], ["Santa Marta", 1127, 1210, 6, 6.8], ["Jesús Nazareno", 1122, 1251, 0, 6.8],
  ["Monseñor Patricio Infante", 1180, 1288, -3, 6.8], ["Monseñor Patricio Infante", 1428, 1250, 14, 6.8],
  ["Huamachuco", 1085, 847, 85, 6.8], ["Huamachuco", 1106, 945, 85, 6.8], ["Huamachuco", 1129, 1022, 87, 6.8], ["Huamachuco", 1128, 1302, 87, 6.8],
  ["Sierra Nevada", 993, 972, -88, 6.8], ["Sierra Nevada", 996, 1337, -88, 6.8], ["Héroes de la Concepción", 1003, 672, -88, 6.8], ["Héroes de la Concepción", 1066, 970, 65, 6.8], ["Héroes de la Concepción", 1057, 1380, 86, 6.8],
  ["Pirita", 1043, 436, 72, 6.8], ["Pirita", 1144, 785, 82, 6.8], ["Pirita", 1187, 1108, 72, 6.8],
  ["Campamento", 1166, 1092, 0, 10, "#8f8f8f"], ["Luz Divina", 1166, 1104, 0, 10, "#8f8f8f"], ["La Quebrada de La Chimba", 1388, 1113, 3, 6.8],
  ["Oficina Bonasort", 792, 1300, -8, 6.8], ["Oficina Lastenia", 825, 1345, 86, 6.8], ["Oficina Peñaflor", 780, 1410, 0, 6.8], ["Avenida Rica Aventura", 737, 1458, 87, 6.8],
  ["Avenida Pedro Aguirre", 901, 1460, 87, 6.8], ["La Retreta", 873, 1476, 0, 6.8], ["La Estu", 864, 1484, 87, 6.8], ["La Filarm", 842, 1484, 87, 6.8], ["Quebrada La Chimba Norte", 950, 1294, 12, 6.8], ["Quebrada La Chimba", 962, 1315, -16, 6.8],
  ["Fluorita", 1115, 1380, -5, 6.8], ["Quebrada de la Copa", 990, 1491, -4, 6.8], ["Benito Ocampo", 684, 1476, -50, 6.8],
];

const Shapes = ({ items, fill, close = true, ...rest }: { items: string[]; fill?: string; close?: boolean } & React.SVGProps<SVGPathElement>) => (
  <>
    {items.map((s, i) => (
      <path key={i} d={toPath(s, close)} fill={fill ?? "none"} {...rest} />
    ))}
  </>
);

const Cross = ({ x, y }: { x: number; y: number }) => (
  <path d={`M${x} ${y - 6}v12M${x - 3} ${y - 2.5}h6`} stroke="#111" strokeWidth="1.2" fill="none" />
);

const RoadLine = ({ d, width, casing, color }: { d: string; width: number; casing: string; color: string }) => (
  <>
    <path d={d} fill="none" stroke={casing} strokeWidth={width + 1} strokeLinejoin="round" />
    <path d={d} fill="none" stroke={color} strokeWidth={width} strokeLinejoin="round" />
  </>
);

const rail = ["a:1045,15 1300,450 1568,880", "b:0,395 100,555 180,690 225,808 265,960 270,1100 265,1300 275,1568", "e:155,0 175,100 270,310 370,520 395,640 385,780 310,1060 290,1200 310,1400 350,1568"];

const RED_ROAD = "630 98L702 235L765 345L808 440L827 566L840 724L855 864L871 1004L881 1095";
const CALETERA = "M618 98L677 235L733 345L775 425L808 545L815 640L825 760L838 860L848 1000L860 1060";
const STRIP = "M610 98L669 235L725 345L767 425L800 545L806 640L816 760L829 860L838 1000L852 1068";

const CityMap = () => (
  <MapSvg viewBox="402 98 1164 1403" preserveAspectRatio="none">
    <path d={toPath(sea, true)} fill="#aed0dd" stroke="#a78fb0" strokeWidth="1.4" />
    <path d={toPath("c:125,610 145,590 165,600 160,630 145,650 130,635", true)} fill="#f2efe9" />
    <path d={toPath("d:458,695 490,680 510,675 500,725 480,720", true)} fill="#f2efe9" />
    <path d={toPath("d:522,690 540,668 556,680 550,730 525,730", true)} fill="#f2efe9" />

    <Shapes items={paleOlive} fill="#c6c7af" />
    <Shapes items={olive} fill="#b5b491" />
    <Shapes items={purple} fill="#e7dde7" />
    <Shapes items={gray} fill="#dedede" />
    <Shapes items={darkGray} fill="#cdcdcd" />
    {greens.map(([c, s], i) => (
      <path key={i} d={toPath(s, true)} fill={c} />
    ))}
    <path d={toPath("b:505,1485 562,1485 570,1568 510,1568", true)} fill="#dcc9dc" stroke="#9b8a9b" strokeWidth=".4" />
    <path d={toPath("d:1055,1060 1100,1020 1135,1045 1135,1110 1060,1070", true)} fill="#f0d8d6" />

    <Shapes items={parcels} close={false} stroke="#8d8290" strokeWidth=".45" opacity=".75" />
    <Shapes items={buildings} fill="#d9d0c9" stroke="#c4b6ab" strokeWidth=".3" />

    {/* pink race track and the creek */}
    <path
      d={toPath("d:1200,180 1168,190 1175,250 1200,290 1260,305 1385,305 1410,330 1385,355 1290,345 1210,330 1185,315 1130,270 1100,255 1090,280 1130,345 1170,410 1200,430 1215,400 1195,345 1230,370 1240,430 1240,455 1265,400 1285,385 1300,440 1330,435 1430,365 1450,320 1420,280 1350,265 1230,265 1215,240 1205,190 1190,175")}
      fill="none" stroke="#f6c4d1" strokeWidth="3.4" strokeLinejoin="round"
    />
    <path d={toPath("d:910,515 1100,500 1250,495 1420,450")} fill="none" stroke="#a9cf8e" strokeWidth="3.6" />
    <path d={toPath("d:910,515 1100,500 1250,495 1420,450")} fill="none" stroke="#7fb3c6" strokeWidth=".8" />
    <path d={toPath("d:820,545 905,512")} fill="none" stroke="#9fd0e2" strokeWidth="1.2" strokeDasharray="3 2" />
    <path d={toPath("d:750,475 775,465 805,470 800,488 760,490", true)} fill="#a9cf8e" />
    <path d={toPath("d:745,540 780,532 810,545 790,553 750,550", true)} fill="#a9cf8e" />

    {/* caletera strip */}
    <path d={STRIP} fill="none" stroke="#dff5dc" strokeWidth="10" />

    {/* roads */}
    <Shapes items={tracks} close={false} stroke="#d6d2cc" strokeWidth="3.2" strokeLinejoin="round" />
    <Shapes items={streets} close={false} stroke="#cfcac4" strokeWidth="3.6" strokeLinejoin="round" />
    <Shapes items={tracks} close={false} stroke="#f8f7f5" strokeWidth="2.6" strokeLinejoin="round" />
    <Shapes items={tracks} close={false} stroke="#dcd9d4" strokeWidth="2.2" strokeDasharray=".5 1.3" />
    <Shapes items={lanes} close={false} stroke="#f6f6f6" strokeWidth="1.6" strokeLinejoin="round" />
    <Shapes items={streets} close={false} stroke="#fff" strokeWidth="3" strokeLinejoin="round" />
    <Shapes items={footways} close={false} stroke="#f0776a" strokeWidth=".7" strokeDasharray="1.6 1.2" opacity=".8" />
    <Shapes items={trails} close={false} stroke="#a9853e" strokeWidth="1.2" strokeDasharray="3 1.4" />

    {rail.map((s, i) => (
      <g key={i}>
        <path d={toPath(s)} fill="none" stroke="#7d7d7d" strokeWidth="2.6" />
        <path d={toPath(s)} fill="none" stroke="#f0f0f0" strokeWidth="1.2" strokeDasharray="5 5" />
      </g>
    ))}

    {/* Ruta 1 with its service road and the caletera beside it */}
    <path d={CALETERA} fill="none" stroke="#cfcac4" strokeWidth="4.2" />
    <path d={CALETERA} fill="none" stroke="#fff" strokeWidth="3.6" />
    <path d={`M${RED_ROAD}`} fill="none" stroke="#fff" strokeWidth="19" transform="translate(2 0)" />
    <RoadLine d={`M${RED_ROAD}`} width={12} casing="#cf8a99" color="#e2979f" />
    <path d={STRIP} fill="none" stroke="#3b5fe0" strokeWidth=".9" strokeDasharray="2.2 1.6" />
    <path d={toPath("c:1240,680 1282,680 1280,610")} fill="none" stroke="#fff" strokeWidth="3" />
    <path d={toPath("c:1240,680 1246,760 1254,760 1250,680")} fill="#fff" stroke="#f0776a" strokeWidth=".7" strokeDasharray="1.6 1.2" />
    <path d={toPath("c:1272,980 1312,992 1315,1045 1280,1045")} fill="#fff" stroke="#f0776a" strokeWidth=".7" strokeDasharray="1.6 1.2" />

    <RoadLine d="M882 1090L889 1150L895 1250L902 1380L908 1501" width={11.5} casing="#d8a763" color="#f8d3a0" />
    <RoadLine d="M862 1172L719 1331L550 1501" width={11} casing="#d98f78" color="#efab94" />

    {/* roundabout */}
    <circle cx="873" cy="1160" r="14" fill="#b5d29a" stroke="#d8a763" strokeWidth="6.5" />
    <circle cx="873" cy="1160" r="14" fill="none" stroke="#f8d3a0" strokeWidth="5.5" />
    <path d="M867 1172L881 1146" stroke="#f8d3a0" strokeWidth="2.4" />

    <Shapes items={powerLines} close={false} stroke="#9a9a95" strokeWidth=".55" />
    {towers.map(([x, y, k], i) => {
      const [px, py] = toPoint(x, y, k);
      return <rect key={i} x={px - 1.7} y={py - 1.7} width="3.4" height="3.4" fill="#f2efe9" stroke="#777" strokeWidth=".5" />;
    })}

    {[[977, 452], [1088, 1130], [1054, 1290]].map(([x, y], i) => (
      <path key={i} d={`M${x - 4} ${y - 4}l8 8m0 -8l-8 8`} stroke="#555" strokeWidth=".8" />
    ))}

    {arrows.map(([x, y, a, c], i) => (
      <path key={i} d="M0 4V-4M-2 -1.5L0 -4L2 -1.5" transform={`translate(${x} ${y}) rotate(${a})`} fill="none" stroke={c} strokeWidth="1" />
    ))}

    {stops.map(([x, y], i) => (
      <rect key={i} x={x - 2.6} y={y - 2.6} width="5.2" height="5.2" fill="#3d95da" />
    ))}

    <rect x="859" y="773" width="18" height="32" fill="#e7e4e0" />
    <Cross x={824} y={1281} />
    <Cross x={844} y={1265} />
    <path d="M723 1349h9v12h-9z" fill="#7b5b23" />

    {shields.map(([x, y], i) => (
      <g key={i}>
        <rect x={x - 5.5} y={y - 7} width="11" height="14" rx="2" fill="#eacdd0" stroke="#fff" strokeWidth=".8" />
        <text x={x} y={y + 3} fontSize="8" fill="#5c3a42" stroke="none">1</text>
      </g>
    ))}

    {labels.map(([t, x, y, a = 0, size = 6.8, color = ROAD, italic], i) => (
      <text key={i} x={x} y={y} fontSize={size * 1.06} fill={color} fontStyle={italic ? "italic" : undefined} transform={a ? `rotate(${a} ${x} ${y})` : undefined}>
        {t}
      </text>
    ))}

    {/* route and vehicle points */}
    <path d="M908 1501V1408L995 1403V1418" fill="none" stroke="#f2962f" strokeWidth="3" />
    <path d="M903 1413L908 1408L903 1403M904 1487L908 1482L912 1487" fill="none" stroke="#f2962f" strokeWidth="1.2" />
    {[[978, 1420, 4], [968, 1441, 3.6], [971, 1440, 3.6], [974, 1439, 3.6], [977, 1437, 3.6], [995, 1438, 4], [1001, 1427, 2.5]].map(([x, y, r], i) => (
      <circle key={i} cx={x} cy={y} r={r} fill="#0000bb" stroke="#fff" strokeWidth="1" />
    ))}
    <circle cx="984" cy="1435" r="5.6" fill="#8b8b8b" stroke="#fff" strokeWidth="1.6" />
    <path d="M994 1415a7.5 7.5 0 0 1 7.5 7.5c0 5-7.5 12-7.5 12s-7.5-7-7.5-12a7.5 7.5 0 0 1 7.5-7.5z" fill="#4288dd" />
    <text x="994" y="1426" fontSize="9" fill="#1d2c44" stroke="none">A</text>
  </MapSvg>
);

/* ---------- data ---------- */

type RowData = { icon: React.ReactNode; label: string; value: string; inset?: boolean; thin?: boolean };
type SectionData = { title: string; rows: RowData[] };

const gauge = <DashedGaugeIcon />;
const gear = (
  <GearTile>
    <MdSettings size={24} />
  </GearTile>
);

const sections: SectionData[] = [
  {
    title: "Common",
    rows: [
      { icon: gauge, label: "Horometer", value: "317.75 h" },
      { icon: gauge, label: "Odometer", value: "232467 km" },
      { icon: <RpmIcon />, label: "Engine RPM", value: "660 RPM" },
      { icon: gauge, label: "Vehicle Speed", value: "0 km/h" },
    ],
  },
  {
    title: "Fuel",
    rows: [
      { icon: <MdLocalGasStation size={34} />, label: "Fuel Level", value: "34.4 %" },
      { icon: <CanIcon />, label: "Total fuel", value: "85767.50 lt" },
    ],
  },
  {
    title: "Engine",
    rows: [{ icon: <OilIcon />, label: "Engine Oil Pressure", value: "0 psi" }],
  },
  {
    title: "Advanced",
    rows: [
      { icon: <FaPercent size={27} />, label: "Torque", value: "0 %" },
      { icon: <FaPercent size={27} />, label: "Driver's Demand (Engine Torque)", value: "0 %" },
    ],
  },
  {
    title: "Fluids",
    rows: [{ icon: gear, label: "Diesel Exhaust Fluid Level", value: "85.6 %" }],
  },
  {
    title: "Others",
    rows: [{ icon: gear, label: "Cruise Control", value: "OFF", inset: true, thin: true }],
  },
];

export default function App() {
  return (
    <Frame>
      <GlobalStyle />
      <Browser>
        <TitleBar>
          <NavIcons>
            <SidebarIcon />
            <BackIcon />
            <BackIcon faded />
            <ReloadIcon />
          </NavIcons>
          <UrlBar>
            <LinkIcon />
            pegasus73.peginstances.com
          </UrlBar>
          <WinIcons>
            <FiltersIcon />
            <SplitIcon />
          </WinIcons>
        </TitleBar>

        <AppBar>
          <MdMenu size={36} />
          <AppTitle>Tracking</AppTitle>
          <Notice>
            <NoticeTitle>engine off send powerasafe</NoticeTitle>
            <NoticeRow>
              <span>SGXB62</span>
              <span>Today, 13:52</span>
            </NoticeRow>
            <div>Ruta B-151. CALAMA, PROVINCIA DE EL LOA ...</div>
          </Notice>
          <Spacer />
          <ProximityLabel>Proximity</ProximityLabel>
          <Toggle>
            <ToggleThumb />
          </Toggle>
          <Bell>
            <MdNotifications size={36} />
            <BellDot />
          </Bell>
        </AppBar>

        <Body>
          <Panel>
            <PanelHeader>
              <MdArrowBack size={34} />
              <PanelTitle>LFJL17 - PRUEBA MB</PanelTitle>
              <Offline>OFFLINE</Offline>
              <MdMoreVert size={34} />
            </PanelHeader>

            <HeadingRow>
              <Heading>Engine Data</Heading>
              <MdPowerSettingsNew size={36} color="#e53935" />
            </HeadingRow>

            <Card>
              <Row>
                <IconSlot>
                  <CodeIcon />
                </IconSlot>
                <RowLabel>ECU Firmware Version</RowLabel>
                <RowValue>6.1.3-apex</RowValue>
              </Row>
            </Card>

            <Card $flush>
              <CardTitle $short>Engine Faults</CardTitle>
              <Alert>
                <MdWarning size={36} />
                <span>One of the 'common' parameters has not reported changes in more than 1 day</span>
              </Alert>
              <Row>
                <IconSlot>
                  <EngineIcon />
                </IconSlot>
                <RowLabel>Protocol</RowLabel>
                <RowValue>J1939/FMS</RowValue>
              </Row>
              <Row>
                <IconSlot>
                  <EngineIcon />
                </IconSlot>
                <RowLabel>MIL:</RowLabel>
                <RowValue>OFF</RowValue>
              </Row>
            </Card>

            {sections.map((section) => (
              <Card key={section.title}>
                <CardTitle>{section.title}</CardTitle>
                {section.rows.map((row) => (
                  <Row key={row.label} $muted>
                    <IconSlot>{row.icon}</IconSlot>
                    <RowLabel>{row.label}</RowLabel>
                    <RowValue $inset={row.inset} $thin={row.thin}>
                      {row.value}
                    </RowValue>
                  </Row>
                ))}
              </Card>
            ))}
          </Panel>

          <MapArea>
            <CityMap />
            <MapTools>
              <RoundButton>
                <MdFullscreen size={36} />
              </RoundButton>
              <RoundButton>
                <MdGpsFixed size={34} />
              </RoundButton>
              <RoundButton>
                <MdLocalCarWash size={34} />
              </RoundButton>
              <RoundButton>
                <MdDirectionsCar size={34} />
              </RoundButton>
              <RoundButton>
                <PennantIcon />
              </RoundButton>
            </MapTools>
            <SearchBox>
              <MdSearch size={34} />
              <SearchText>Search</SearchText>
              <MdMoreVert size={30} />
            </SearchBox>
            <MapToggle>
              <RoundButton $size={46}>
                <MdMap size={30} />
              </RoundButton>
            </MapToggle>
            <VehicleLabel>LFJL17 - PRUEBA ...</VehicleLabel>
          </MapArea>
        </Body>
      </Browser>
    </Frame>
  );
}
